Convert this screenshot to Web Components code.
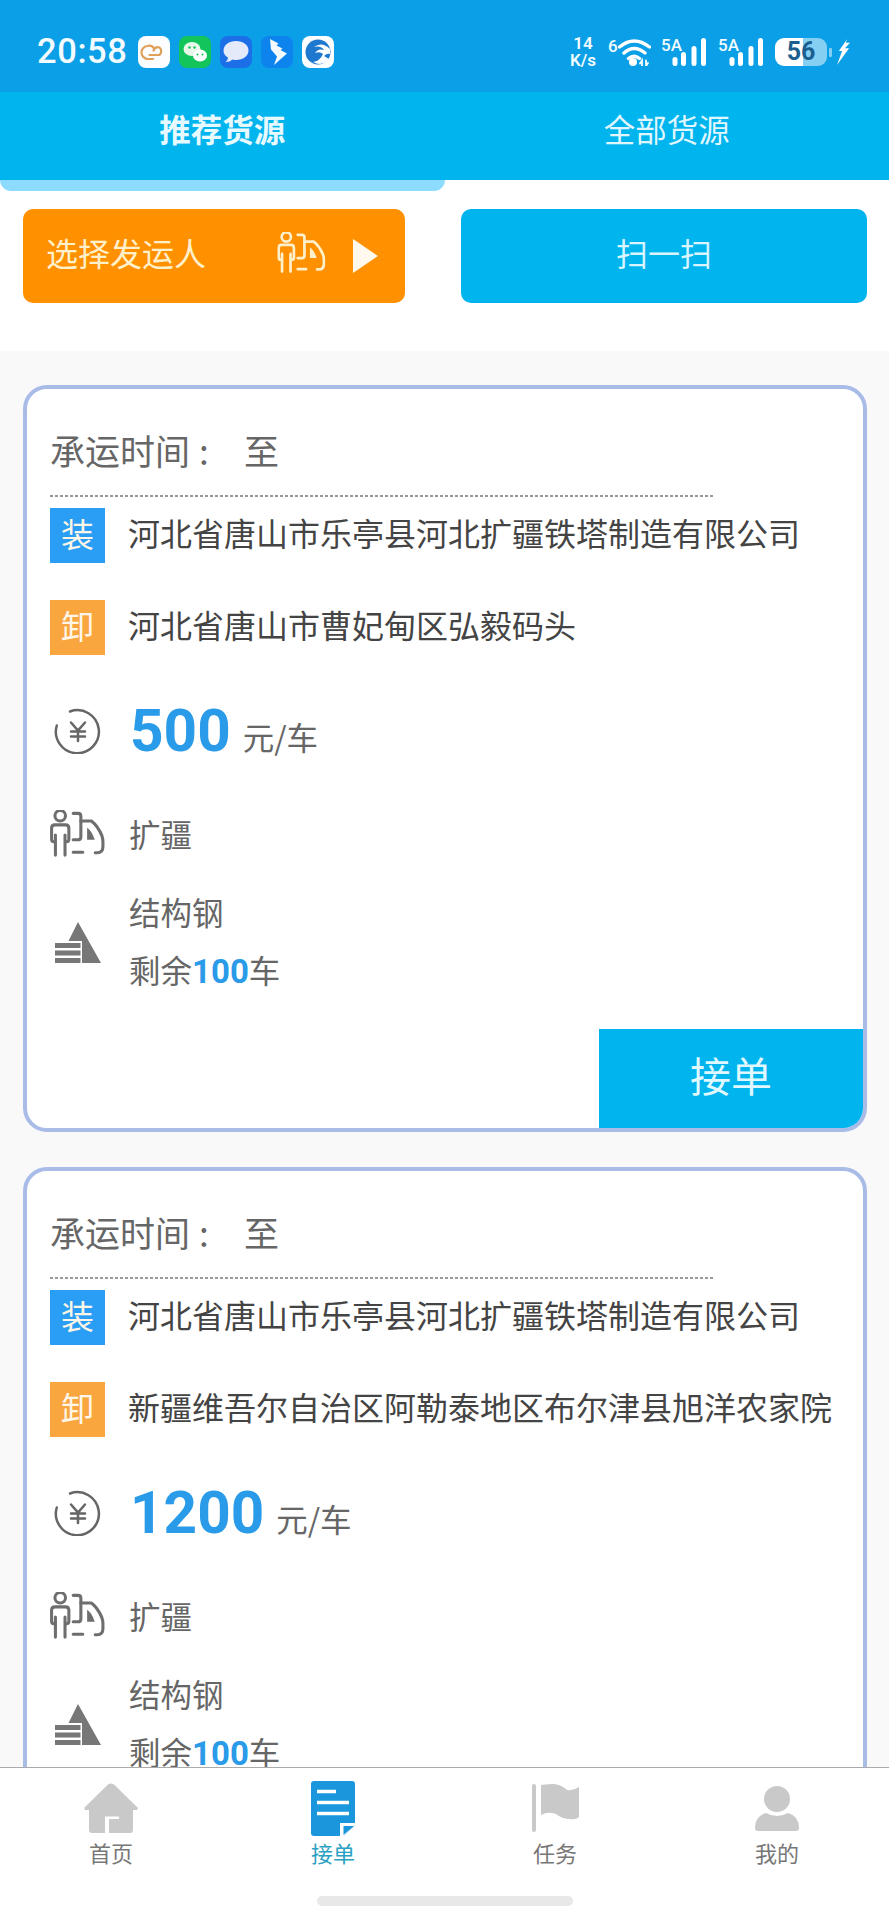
<!DOCTYPE html>
<html lang="zh">
<head>
<meta charset="utf-8">
<title>推荐货源</title>
<style>
  html, body { margin: 0; height: 1919px; overflow: hidden; background: #fff; }
  body {
    display: flex;
    flex-direction: column;
    font-family: "Noto Sans CJK SC", "Noto Sans", sans-serif;
  }
</style>
</head>
<body>
<status-bar></status-bar>
<source-tabs active="0"></source-tabs>
<action-bar></action-bar>
<route-list>
  <route-card price="500">
    <span slot="from">河北省唐山市乐亭县河北扩疆铁塔制造有限公司</span>
    <span slot="to">河北省唐山市曹妃甸区弘毅码头</span>
  </route-card>
  <route-card price="1200">
    <span slot="from">河北省唐山市乐亭县河北扩疆铁塔制造有限公司</span>
    <span slot="to">新疆维吾尔自治区阿勒泰地区布尔津县旭洋农家院</span>
  </route-card>
</route-list>
<bottom-nav></bottom-nav>

<script>
const ICONS = {
  driver: `<svg viewBox="0 0 57 50" width="55" height="48" fill="none" stroke="currentColor" stroke-width="3.200" stroke-linecap="round" stroke-linejoin="round">
    <circle cx="10.500" cy="6" r="5.500"/>
    <path d="M5.500 33H4Q1.500 33 1.500 30.500V19Q1.500 15.500 5 15.500H16Q19.500 15.500 19.500 19V30.500Q19.500 33 17 33H15.500M5.500 26V47M15.500 26V47"/>
    <path d="M24 3.500H29Q32 3.500 32 6.500V28Q32 31 29 31H24M24 44H34"/>
    <path d="M32 11.500H43Q50 17 54 27Q55 30 55 33V38Q55 44.500 49 44.500H47"/>
    <path d="M38.500 18.500Q43 21 46.500 31H38.500Z" fill="currentColor" stroke="none"/>
  </svg>`,
  yen: `<svg viewBox="0 0 50 46" width="50" height="46" fill="none" stroke="currentColor" stroke-width="2.500" stroke-linecap="round">
    <path d="M17 3.500A21.500 21.500 0 1 1 3.800 17.500"/>
    <path d="M18 14.500L25 22.500L32 14.500M18 23.500H32M18 28.500H32M25 22.500V33"/>
  </svg>`,
  cargo: `<svg viewBox="0 0 46 41" width="46" height="41" fill="currentColor">
    <path d="M23 0L46 41H27V19H13.500Z"/>
    <rect x="0" y="21" width="25.500" height="5"/>
    <rect x="0" y="28.500" width="25.500" height="5"/>
    <rect x="0" y="36" width="25.500" height="5"/>
  </svg>`,
  home: `<svg viewBox="0 0 56 50" width="56" height="50" fill="#c9c9c9">
    <path fill-rule="evenodd" d="M25 1.500Q28 -.5 31 1.500L55 25L54 27H50V47Q50 50 47 50H26V36H36V33.500H22V50H9Q6 50 6 47V27H2L1 25Z"/>
  </svg>`,
  doc: `<svg viewBox="0 0 44 55" width="44" height="55">
    <path d="M3 0H41Q44 0 44 3V44L33 55H3Q0 55 0 52V3Q0 0 3 0Z" fill="#1a96dc"/>
    <path d="M6 10.500H25M6 21.500H38M6 32.500H38" stroke="#fff" stroke-width="3.500"/>
    <path d="M29 42H44V44L33 55H29Z" fill="#fff"/>
    <path d="M32.500 45H43L32.500 54Z" fill="#1a96dc"/>
  </svg>`,
  flag: `<svg viewBox="0 0 47 48" width="47" height="48" fill="#c9c9c9">
    <rect x="0" y="0" width="4" height="48" rx="2"/>
    <path d="M9 1Q16 0 22 0Q30 1 35 6Q41 7 47 3V33Q44 36 38 35Q30 35 24 30Q16 27 9 31Z"/>
  </svg>`,
  user: `<svg viewBox="0 0 44 45" width="44" height="45" fill="#c9c9c9">
    <circle cx="22" cy="13" r="13"/>
    <path d="M0 42Q0 30 11 27Q22 33 33 27Q44 30 44 42Q44 45 41 45H3Q0 45 0 42Z"/>
  </svg>`
};

class AppIcon extends HTMLElement {
  connectedCallback() {
    const root = this.attachShadow({ mode: 'open' });
    root.innerHTML = `<style>:host { display: inline-flex; line-height: 0; }</style>${ICONS[this.getAttribute('name')]}`;
  }
}
customElements.define('app-icon', AppIcon);

class StatusBar extends HTMLElement {
  connectedCallback() {
    const signal = `<div class="signal"><span>5A</span>
      <svg viewBox="0 0 40 28" width="40" height="28" fill="#fff"><rect x="5.500" y="19" width="5" height="9" rx="2.500"/><rect x="14" y="14" width="5" height="14" rx="2.500"/><rect x="24.500" y="8" width="5" height="20" rx="2.500"/><rect x="34" y="0" width="5" height="28" rx="2.500"/></svg>
    </div>`;
    const root = this.attachShadow({ mode: 'open' });
    root.innerHTML = `
      <style>
        :host { display: flex; flex: none; height: 92px; box-sizing: border-box; align-items: center; padding: 12px 39px 0 37px; background: #0a9fe6; color: #f2fbff; }
        .time { font: 500 34.500px/36px Roboto, "Noto Sans", sans-serif; letter-spacing: .6px; width: 101px; margin-top: -3px; }
        .apps { display: flex; gap: 9px; }
        .apps svg { display: block; }
        .right { margin-left: auto; display: flex; align-items: center; }
        .speed { font: 600 17px/17px Roboto, sans-serif; text-align: center; width: 30px; margin-right: 10px; }
        .wifi { display: flex; align-items: flex-start; width: 43px; height: 28px; margin-right: 10px; }
        .wifi span { font: 500 17px/17px Roboto, sans-serif; width: 10px; flex: none; }
        .signal { display: grid; width: 46px; height: 28px; margin-right: 11px; }
        .signal > * { grid-area: 1 / 1; }
        .signal span { font: 500 17px/15px Roboto, sans-serif; }
        .signal svg { align-self: end; justify-self: end; }
        .battery { width: 52px; height: 28px; border-radius: 9px; background: linear-gradient(90deg, #fff 0 54%, rgba(255,255,255,.5) 54%); color: #1b5f8f; font: 700 25px/28px Roboto, sans-serif; text-align: center; }
        .nub { width: 3px; height: 9px; margin: 0 5px 0 2px; background: rgba(255,255,255,.5); border-radius: 1px; }
      </style>
      <div class="time">20:58</div>
      <div class="apps">
        <svg width="32" height="32" viewBox="0 0 32 32"><rect width="32" height="32" rx="8" fill="#fbfdff"/><path d="M15 23H10.500A6.500 6.500 0 0 1 9.500 10Q14 8.500 16.500 13M11.500 19H21.500A5 5 0 0 0 21.500 11.500Q17.500 10 15.500 14.500" fill="none" stroke="#e0a05a" stroke-width="2.200" stroke-linecap="round"/></svg>
        <svg width="32" height="32" viewBox="0 0 32 32"><rect width="32" height="32" rx="8" fill="#13c45a"/><ellipse cx="13" cy="13" rx="8.500" ry="7" fill="#e8f7ea"/><ellipse cx="21" cy="19.500" rx="7" ry="6" fill="#fff"/><circle cx="10.500" cy="11.500" r="1.200" fill="#13c45a"/><circle cx="15.500" cy="11.500" r="1.200" fill="#13c45a"/><circle cx="18.500" cy="18.500" r="1" fill="#13c45a"/><circle cx="23.500" cy="18.500" r="1" fill="#13c45a"/></svg>
        <svg width="32" height="32" viewBox="0 0 32 32"><rect width="32" height="32" rx="8" fill="#1d6fe8"/><path d="M16 5C23 5 28.500 9 28.500 14.500S23 24 16 24Q14 24 12.500 23.500Q10 26 5.500 26Q8 24 8 21.500Q3.500 19 3.500 14.500C3.500 9 9 5 16 5Z" fill="#e4eafa"/></svg>
        <svg width="32" height="32" viewBox="0 0 32 32"><rect width="32" height="32" rx="8" fill="#0d83ee"/><path d="M9 3L17.500 7.500L15.500 9.500L21.500 12.500L19.500 14L26 17.500L13 29L16 20.500L10 13.500Z" fill="#f4fafe"/></svg>
        <svg width="32" height="32" viewBox="0 0 32 32"><rect width="32" height="32" rx="8" fill="#fbfdff"/><circle cx="16" cy="16" r="12.500" fill="#1f78cf"/><path d="M28 13Q20 5 12 11Q19 9 22 14Q16 12 13 17Q18 15 21 18Q18 25 11 26Q20 31 27 23L22 20Q25 17 28 18Z" fill="#fbfdff"/></svg>
      </div>
      <div class="right">
        <div class="speed">14<br>K/s</div>
        <div class="wifi">
          <span>6</span>
          <svg width="33" height="28" viewBox="10 0 33 28" fill="none" stroke="#fff" stroke-width="3.400" stroke-linecap="round">
            <path d="M11.500 9Q26 -3 41.500 9M16 15Q26 6 37 15M20.500 20.500Q26 16 31.500 20.500"/>
            <circle cx="25" cy="24" r="4" fill="#fff" stroke="none"/>
            <path d="M34 28V22.500l-2 3M38 22.500V28l2-3" stroke-width="1.800"/>
          </svg>
        </div>
        ${signal}${signal}
        <div class="battery">56</div>
        <div class="nub"></div>
        <svg width="13" height="28" viewBox="0 0 14 28" fill="#fff"><path d="M11 0L2 13H5.500L0 28L13 10H8.500L14 4H9.500Z"/></svg>
      </div>`;
  }
}
customElements.define('status-bar', StatusBar);

class SourceTabs extends HTMLElement {
  connectedCallback() {
    const root = this.attachShadow({ mode: 'open' });
    root.innerHTML = `
      <style>
        :host { display: block; flex: none; }
        .tabs { display: grid; grid-template-columns: 1fr 1fr; background: #00b4ee; height: 88px; }
        .tab { text-align: center; font-size: 31.500px; line-height: 73px; color: #dff6ff; }
        .tab.on { font-weight: 700; color: #e6f9ff; }
        .ink { width: 445px; height: 11px; background: #8ddcff; border-radius: 0 0 14px 14px; }
      </style>
      <div class="tabs">
        <div class="tab on">推荐货源</div>
        <div class="tab">全部货源</div>
      </div>
      <div class="ink"></div>`;
  }
}
customElements.define('source-tabs', SourceTabs);

class ActionBar extends HTMLElement {
  connectedCallback() {
    const root = this.attachShadow({ mode: 'open' });
    root.innerHTML = `
      <style>
        :host { display: flex; flex: none; justify-content: space-between; height: 160px; box-sizing: border-box; padding: 18px 22px 0 23px; background: #fff; }
        .btn { height: 94px; border-radius: 10px; box-sizing: border-box; display: flex; align-items: center; font-size: 32px; }
        .btn span { padding-bottom: 9px; }
        .pick { width: 382px; background: #ff9000; color: #fff0cc; padding-left: 23px; }
        .pick app-icon { margin: 0 0 6px 68px; transform: scale(.88); }
        .play { width: 0; height: 0; margin-left: 24px; border-left: 25px solid #fff8ec; border-top: 17px solid transparent; border-bottom: 17px solid transparent; }
        .scan { width: 406px; background: #00b4ee; color: #d8f5ff; justify-content: center; }
      </style>
      <div class="btn pick"><span>选择发运人</span><app-icon name="driver"></app-icon><div class="play"></div></div>
      <div class="btn scan"><span>扫一扫</span></div>`;
  }
}
customElements.define('action-bar', ActionBar);

class RouteList extends HTMLElement {
  connectedCallback() {
    const root = this.attachShadow({ mode: 'open' });
    root.innerHTML = `
      <style>
        :host { display: flex; flex-direction: column; flex: 1; min-height: 0; overflow: hidden; gap: 35px; box-sizing: border-box; padding: 34px 22px 0 23px; background: #f9f9fa; }
        ::slotted(*) { flex: none; }
      </style>
      <slot></slot>`;
  }
}
customElements.define('route-list', RouteList);

class RouteCard extends HTMLElement {
  connectedCallback() {
    const price = this.getAttribute('price');
    const root = this.attachShadow({ mode: 'open' });
    root.innerHTML = `
      <style>
        :host { display: block; box-sizing: border-box; height: 747px; border: 4px solid #a9bce8; border-radius: 24px; background: #fff; overflow: hidden; color: #444; }
        .head { margin-left: 23px; width: 663px; height: 108px; font-size: 35px; line-height: 122px; color: #666; white-space: pre; background: repeating-linear-gradient(90deg, #999 0 3px, transparent 3px 5px) bottom / 100% 2px no-repeat; }
        .head span { display: inline-block; width: 194px; }
        .head i { font-style: normal; margin-left: 9px; }
        .stop { display: flex; align-items: center; height: 55px; margin-left: 23px; font-size: 32px; }
        .stop div:last-child { padding-bottom: 7px; }
        .tag { width: 55px; height: 55px; margin-right: 23px; flex: none; text-align: center; line-height: 50px; color: #fff6e8; font-size: 33px; }
        .tag.load { background: #2a9df4; }
        .tag.drop { background: #f9a63f; }
        .price { display: flex; align-items: center; height: 60px; margin: 46px 0 0 26px; }
        .price app-icon { color: #666; margin-right: 27px; }
        .amount { font: 700 58.500px/60px Roboto, "Noto Sans", sans-serif; color: #2a9be8; margin-right: 12px; }
        .unit { font-size: 31.500px; color: #666; padding-top: 10px; }
        .row { display: flex; align-items: center; color: #666; font-size: 31.500px; }
        .row app-icon { color: #6e6e6e; }
        .owner { height: 50px; margin: 48px 0 0 23px; gap: 24px; }
        .owner span { padding-bottom: 3px; }
        .goods { height: 116px; margin: 23px 0 0 28px; gap: 28px; line-height: 58px; }
        .goods app-icon { margin-top: 4px; color: #777; }
        .goods b { font: 700 33px Roboto, "Noto Sans", sans-serif; color: #2a9be8; }
        .take { margin: 31px 0 0 auto; width: 264px; height: 99px; background: #00b4ee; color: #dff8ff; text-align: center; font-size: 41px; line-height: 90px; }
      </style>
      <div class="head"><span>承运时间<i>:</i></span>至</div>
      <div class="stop" style="margin-top:11px"><div class="tag load">装</div><div><slot name="from"></slot></div></div>
      <div class="stop" style="margin-top:37px"><div class="tag drop">卸</div><div><slot name="to"></slot></div></div>
      <div class="price"><app-icon name="yen"></app-icon><span class="amount">${price}</span><span class="unit">元/车</span></div>
      <div class="row owner"><app-icon name="driver"></app-icon><span>扩疆</span></div>
      <div class="row goods"><app-icon name="cargo"></app-icon><div>结构钢<br>剩余<b>100</b>车</div></div>
      <div class="take">接单</div>`;
  }
}
customElements.define('route-card', RouteCard);

class BottomNav extends HTMLElement {
  connectedCallback() {
    const items = [
      ['home', '首页'],
      ['doc', '接单', true],
      ['flag', '任务'],
      ['user', '我的']
    ];
    const root = this.attachShadow({ mode: 'open' });
    root.innerHTML = `
      <style>
        :host { display: block; flex: none; height: 152px; box-sizing: border-box; border-top: 1px solid #aaa; background: #fff; }
        .items { display: grid; grid-template-columns: repeat(4, 222px); }
        .item { display: flex; flex-direction: column; align-items: center; font-size: 22px; color: #777; }
        .item.on { color: #2a9fc4; }
        .glyph { height: 62px; margin-top: 9px; display: flex; align-items: center; }
        .item span { line-height: 26px; }
        .pill { width: 256px; height: 10px; margin: 31px auto 0; border-radius: 5px; background: #e8e8e8; }
      </style>
      <div class="items">
        ${items.map(([icon, label, on]) => `<div class="item${on ? ' on' : ''}"><div class="glyph"><app-icon name="${icon}"></app-icon></div><span>${label}</span></div>`).join('')}
      </div>
      <div class="pill"></div>`;
  }
}
customElements.define('bottom-nav', BottomNav);
</script>
</body>
</html>
